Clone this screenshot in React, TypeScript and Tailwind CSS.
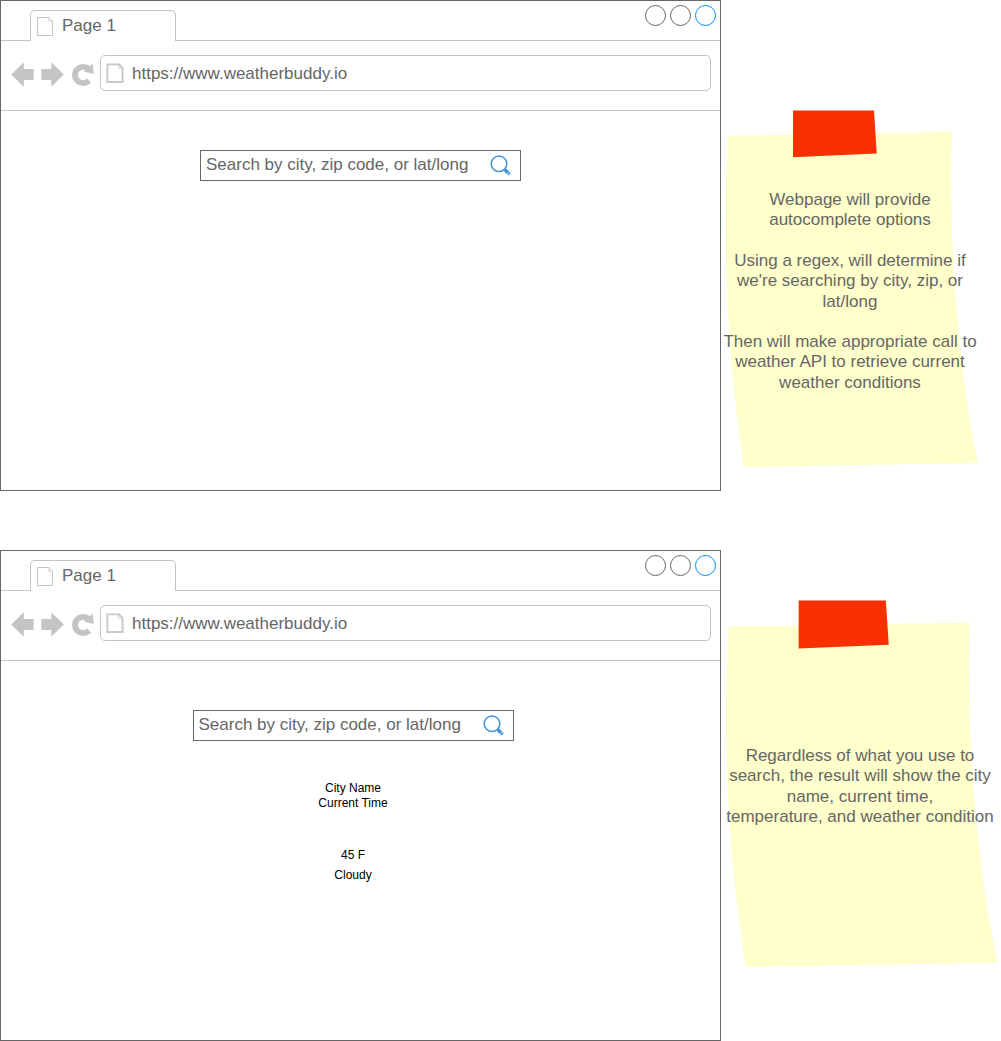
import React, { useId } from "react";

function TabPageIcon() {
  return (
    <svg viewBox="0 0 18 20" className="h-5 w-[18px]" fill="none" stroke="#c4c4c4" aria-hidden="true">
      <path d="M1.5 1.5H13L16.5 5V19.5H1.5Z" />
      <path d="M13 1.5C12.6 3 12.8 4.2 12.6 5.2C14 4.8 15 5.2 16.5 5" strokeWidth="0.7" />
    </svg>
  );
}

function AddressPageIcon() {
  return (
    <svg viewBox="0 0 18 20" className="h-5 w-[18px]" fill="none" stroke="#c8c8c8" aria-hidden="true">
      <path d="M1.4 1.4H13.2L16.6 5V19H1.4Z" strokeWidth="1.9" />
      <path d="M12.6 1.5V5.4H16.6" strokeWidth="0.8" />
    </svg>
  );
}

function BackIcon() {
  return (
    <svg viewBox="0 0 24 26" className="h-[26px] w-6" fill="#c4c4c4" aria-hidden="true">
      <path d="M0.2 12.5L12.8 0.3V7H22.6V18H12.8V24.7Z" />
    </svg>
  );
}

function ForwardIcon() {
  return (
    <svg viewBox="0 0 24 26" className="h-[26px] w-6" fill="#c4c4c4" aria-hidden="true">
      <path d="M22.8 12.5L10.3 0.3V7H0.3V18H10.3V24.7Z" />
    </svg>
  );
}

function ReloadIcon() {
  return (
    <svg viewBox="0 0 24 26" className="h-[26px] w-6" aria-hidden="true">
      <path d="M18 18.5A8.1 8.1 0 1 1 17.8 7.2" fill="none" stroke="#c4c4c4" strokeWidth="5.8" />
      <path d="M21.6 1.6L22.8 11.9L12.7 9.4Z" fill="#c4c4c4" />
    </svg>
  );
}

function SearchIcon() {
  return (
    <svg viewBox="0 0 22 22" className="h-[22px] w-[22px]" fill="none" stroke="#4495d8" aria-hidden="true">
      <circle cx="10" cy="8.7" r="7.8" strokeWidth="1.5" />
      <path d="M15.2 13.9L16.8 15.5" strokeWidth="2" />
      <path d="M16 14.7L19 17.7" strokeWidth="3.6" />
      <path d="M19.4 18.1L20.6 19.3" strokeWidth="3.2" />
    </svg>
  );
}

function SearchBox() {
  return (
    <form
      role="search"
      onSubmit={(e) => e.preventDefault()}
      className="flex h-[31px] w-[321px] items-center border border-[#666666] bg-white pr-[9px] pl-[5px]"
    >
      <input
        type="search"
        aria-label="Search by city, zip code, or lat/long"
        placeholder="Search by city, zip code, or lat/long"
        className="mb-0.5 h-5 min-w-0 flex-1 text-[17px] leading-5 text-[#666666] outline-none placeholder:text-[#666666] placeholder:opacity-100"
      />
      <button type="submit" aria-label="Search">
        <SearchIcon />
      </button>
    </form>
  );
}

function BrowserWindow({ children }: { children: React.ReactNode }) {
  const urlId = useId();
  return (
    <article className="flex min-h-[491px] min-w-0 flex-col border border-[#666666] bg-white">
      <div className="flex h-10 items-stretch">
        <div className="w-[29px] border-b border-[#c4c4c4]" />
        <div className="mt-[9px] flex w-[146px] items-center rounded-t-[5px] border border-b-0 border-[#c4c4c4] pl-[5px]">
          <TabPageIcon />
          <span className="pl-2 text-[17px] leading-5">Page 1</span>
        </div>
        <div className="flex flex-1 items-start justify-end gap-1 border-b border-[#c4c4c4] pt-1 pr-1">
          <button aria-label="Minimize" className="size-[21px] rounded-full border border-[#666666]" />
          <button aria-label="Maximize" className="size-[21px] rounded-full border border-[#666666]" />
          <button aria-label="Close" className="size-[21px] rounded-full border border-[#008cff]" />
        </div>
      </div>
      <div className="flex h-[70px] items-start border-b border-[#c4c4c4] pt-[14px] pr-[9px] pl-[10px]">
        <div className="flex h-9 items-center gap-[6px] pt-[3px] pr-[5px]">
          <button aria-label="Back"><BackIcon /></button>
          <button aria-label="Forward"><ForwardIcon /></button>
          <button aria-label="Reload"><ReloadIcon /></button>
        </div>
        <div className="flex h-9 min-w-0 flex-1 items-center rounded-[5px] border border-[#c4c4c4] pl-[5px]">
          <label htmlFor={urlId} aria-label="Address">
            <AddressPageIcon />
          </label>
          <input
            id={urlId}
            type="url"
            defaultValue="https://www.weatherbuddy.io"
            className="mt-0.5 ml-2 h-5 min-w-0 flex-1 text-[17px] leading-5 outline-none"
          />
        </div>
      </div>
      {children}
    </article>
  );
}

function StickyNote({ className, children }: { className: string; children: React.ReactNode }) {
  return (
    <aside className={`relative -ml-px flex flex-col items-center justify-center pt-[3px] ${className}`}>
      <svg viewBox="0 0 260 360" preserveAspectRatio="none" className="absolute inset-0 h-full w-full" aria-hidden="true">
        <path d="M8 25.7L231.7 22C229 120 235 240 257.7 353L24 357C6 240 3 130 8 25.7Z" fill="#ffffcc" />
        <path d="M73 0.5H154L156.7 43.5L73 47.2Z" fill="#f93000" />
      </svg>
      <div className="relative flex w-max flex-col gap-5 text-center text-[17px] leading-[1.2]">{children}</div>
    </aside>
  );
}

export default function App() {
  return (
    <main className="flex min-h-screen flex-col gap-[59px] bg-white font-['Liberation_Sans',Arial,sans-serif] text-[#666666]">
      <section className="grid grid-cols-[minmax(0,1fr)_280px] items-start">
        <BrowserWindow>
          <div className="flex justify-center pt-[39px]">
            <SearchBox />
          </div>
        </BrowserWindow>
        <div className="pt-[110px]">
          <StickyNote className="h-[360px] w-[260px]">
            <p>
              Webpage will provide
              <br />
              autocomplete options
            </p>
            <p>
              Using a regex, will determine if
              <br />
              we're searching by city, zip, or
              <br />
              lat/long
            </p>
            <p>
              Then will make appropriate call to
              <br />
              weather API to retrieve current
              <br />
              weather conditions
            </p>
          </StickyNote>
        </div>
      </section>

      <section className="grid grid-cols-[minmax(0,1fr)_280px] items-start">
        <BrowserWindow>
          <div className="flex flex-col items-center pt-[49px] pr-[15px]">
            <SearchBox />
            <div className="pt-10 text-center text-xs leading-[15px] text-black">
              <p>City Name</p>
              <p>Current Time</p>
              <p className="pt-[37px]">45 F</p>
              <p className="pt-[5px]">Cloudy</p>
            </div>
          </div>
        </BrowserWindow>
        <div className="pt-[50px]">
          <StickyNote className="h-[370px] w-[280px]">
            <p>
              Regardless of what you use to
              <br />
              search, the result will show the city
              <br />
              name, current time,
              <br />
              temperature, and weather condition
            </p>
          </StickyNote>
        </div>
      </section>
    </main>
  );
}
